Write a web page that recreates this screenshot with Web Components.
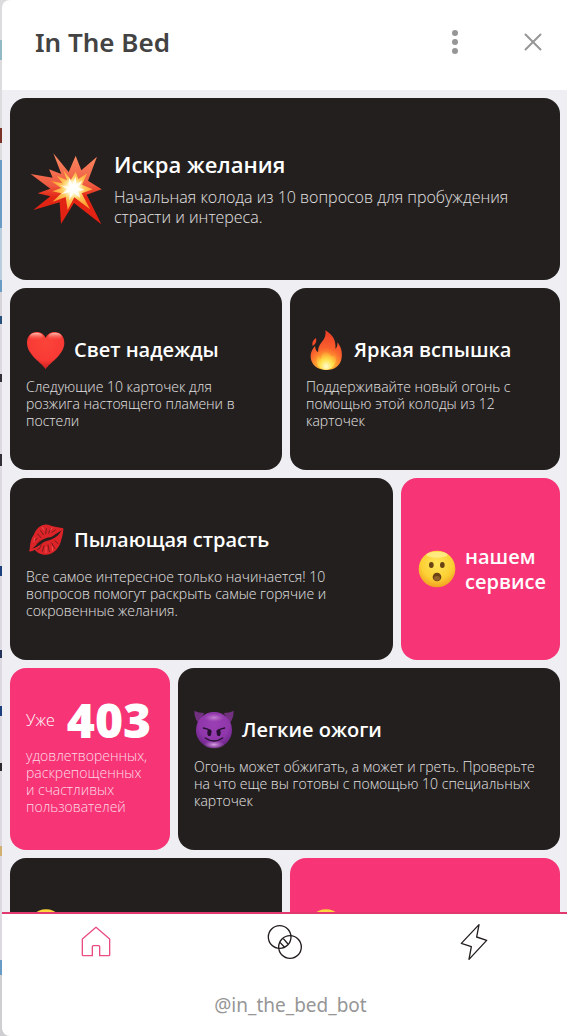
<!DOCTYPE html>
<html lang="ru">
<head>
<meta charset="utf-8">
<meta name="viewport" content="width=device-width, initial-scale=1">
<title>In The Bed</title>
<style>
html, body { margin: 0; height: 100%; }
body {
  --card-font: "Open Sans", "Noto Sans", sans-serif;
  --chrome-font: "Noto Sans", "Open Sans", sans-serif;
  --ink: #231f1e;
  --pink: #f73475;
  font-family: var(--card-font);
}
</style>
</head>
<body>
<bed-app></bed-app>

<template id="t-app">
<style>
:host {
  display: block; height: 100vh; box-sizing: border-box; padding-left: 2px;
  background: linear-gradient(#dcdcde 0 40px, #93bac4 40px 60px, #dcdcde 60px 128px, #7a3326 128px 143px, #dcdcde 143px 160px, #6a9bc4 160px 228px, #b9cddc 228px 280px, #6a9bc4 280px 292px, #d6d4d8 292px 316px, #28507c 316px 324px, #dcdae0 324px 374px, #332f38 374px 382px, #dcdae0 382px 454px, #332f38 454px 466px, #dcdae0 466px 566px, #1c3f7d 566px 576px, #dcdae0 576px 650px, #26345c 650px 658px, #dcdae0 658px 706px, #1c3f7d 706px 716px, #dcdae0 716px 763px, #2b292e 763px 771px, #dcdae0 771px 846px, #d1b072 846px 856px, #dcdae0 856px 960px, #6a9bc4 960px 975px, #cfcfd2 975px);
}
.window {
  height: 100%; display: flex; flex-direction: column; overflow: hidden;
  background: #fff; border-radius: 8px 0 0 8px;
}
main {
  flex: 1; min-height: 0; overflow-y: auto; scrollbar-width: none;
  background: #efeef3; padding: 8px 7px 8px 8px;
  display: flex; flex-direction: column; gap: 8px;
}
bed-row { flex: none; }
</style>
<div class="window">
  <bed-header>In The Bed</bed-header>
  <main>
    <bed-row>
      <deck-card large icon="spark"><span slot="title">Искра желания</span>Начальная колода из 10 вопросов для пробуждения страсти и интереса.</deck-card>
    </bed-row>
    <bed-row style="--cols: 272fr 270fr">
      <deck-card icon="heart"><span slot="title">Свет надежды</span>Следующие 10 карточек для розжига настоящего пламени в постели</deck-card>
      <deck-card icon="fire"><span slot="title">Яркая вспышка</span>Поддерживайте новый огонь с помощью этой колоды из 12 карточек</deck-card>
    </bed-row>
    <bed-row style="--cols: 383fr 159fr">
      <deck-card icon="lips"><span slot="title">Пылающая страсть</span>Все самое интересное только начинается! 10 вопросов помогут раскрыть самые горячие и сокровенные желания.</deck-card>
      <deck-card pink bare icon="wow"><span slot="title">нашем сервисе</span></deck-card>
    </bed-row>
    <bed-row style="--cols: 160fr 382fr">
      <stat-card label="Уже" value="403">удовлетворенных, раскрепощенных и&nbsp;счастливых пользователей</stat-card>
      <deck-card icon="devil"><span slot="title">Легкие ожоги</span>Огонь может обжигать, а может и греть. Проверьте на что еще вы готовы с помощью 10 специальных карточек</deck-card>
    </bed-row>
    <bed-row style="--cols: 272fr 270fr">
      <deck-card icon="face"></deck-card>
      <deck-card pink icon="face"></deck-card>
    </bed-row>
  </main>
  <bed-nav></bed-nav>
  <bed-footer>@in_the_bed_bot</bed-footer>
</div>
</template>

<template id="t-header">
<style>
:host {
  display: flex; align-items: center; height: 90px; flex: none; box-sizing: border-box;
  padding: 0 14px 6px 33px; font-family: var(--chrome-font); color: #434343;
}
h1 { flex: 1; margin: 0; font-size: 26px; line-height: 36px; font-weight: 600; white-space: nowrap; }
.tools { display: flex; gap: 38px; }
button { width: 40px; height: 40px; padding: 0; border: 0; background: none; display: block; }
svg { display: block; width: 40px; height: 40px; }
</style>
<h1><slot></slot></h1>
<div class="tools">
  <button aria-label="Меню"><svg viewBox="0 0 40 40" fill="#969696"><circle cx="20" cy="11" r="3"/><circle cx="20" cy="20" r="3"/><circle cx="20" cy="29" r="3"/></svg></button>
  <button aria-label="Закрыть"><svg viewBox="0 0 40 40" fill="none" stroke="#969696" stroke-width="2" stroke-linecap="round"><path d="M12.500 12.500 27.500 27.500M27.500 12.500 12.500 27.500"/></svg></button>
</div>
</template>

<template id="t-row">
<style>
:host { display: grid; grid-template-columns: var(--cols, 1fr); gap: 8px; grid-auto-rows: 182px; }
</style>
<slot></slot>
</template>

<template id="t-card">
<style>
:host {
  display: flex; flex-direction: column; justify-content: center; gap: 8px; min-width: 0;
  box-sizing: border-box; padding: 0 16px; border-radius: 16px; background: var(--ink); color: #fff;
}
:host([pink]) { background: var(--pink); }
.head { display: flex; align-items: center; gap: 8px; }
emoji-icon { width: 40px; height: 40px; flex: none; }
h2 { margin: 0; font-size: 20px; line-height: 25px; font-weight: 600; }
p { margin: 0; min-height: 34px; font-size: 14px; line-height: 17px; font-weight: 300; color: #e4e3e3; }
:host([bare]) p { display: none; }
:host([large]) { display: grid; grid-template-columns: 80px 1fr; column-gap: 8px; row-gap: 8px; align-content: center; }
:host([large]) .head { display: contents; }
:host([large]) emoji-icon { width: 80px; height: 80px; grid-row: 1 / 3; align-self: center; }
:host([large]) h2 { font-size: 22px; line-height: 30px; }
:host([large]) p { grid-column: 2; font-size: 16px; line-height: 20px; min-height: 42px; }
</style>
<div class="head"><emoji-icon></emoji-icon><h2><slot name="title"></slot></h2></div>
<p><slot></slot></p>
</template>

<template id="t-stat">
<style>
:host {
  display: flex; flex-direction: column; justify-content: center; gap: 6px; min-width: 0;
  box-sizing: border-box; padding: 0 16px 4px; border-radius: 16px; background: var(--pink); color: #fff;
}
.head { display: flex; align-items: center; gap: 12px; }
.label { font-size: 16px; line-height: 20px; font-weight: 300; }
strong { font-size: 48px; line-height: 42px; font-weight: 800; }
p { margin: 0; font-size: 14px; line-height: 17px; font-weight: 300; color: #fddbe6; }
</style>
<div class="head"><span class="label"></span><strong></strong></div>
<p><slot></slot></p>
</template>

<template id="t-nav">
<style>
:host { display: block; flex: none; border-top: 2px solid #e0386f; }
nav { display: grid; grid-template-columns: repeat(3, 1fr); padding: 8px 0 12px; }
a { display: flex; justify-content: center; color: var(--ink); }
a[aria-current] { color: #ea4c84; }
svg { width: 40px; height: 40px; fill: none; stroke: currentColor; stroke-width: 4; stroke-linejoin: round; }
</style>
<nav>
  <a href="#home" aria-label="Главная" aria-current="page"><svg viewBox="228 216 120 120"><path d="M288 232 247 267V314Q247 317 250 317H277V290Q277 287 280 287H296Q299 287 299 290V317H326Q329 317 329 314V267Z"/></svg></a>
  <a href="#match" aria-label="Совпадения"><svg viewBox="793 216 120 120"><circle cx="840" cy="261" r="34"/><circle cx="871" cy="291" r="34"/><path d="M841 277 854 291M851 266 865 282"/></svg></a>
  <a href="#flash" aria-label="Молния"><svg viewBox="279 216 120 120"><path d="M357 224 304 280 334 290 327 328 380 271 350 261Z"/></svg></a>
</nav>
</template>

<template id="t-footer">
<style>
:host { display: block; flex: none; padding: 18px 0; text-align: center; font: 400 19px/26px var(--chrome-font); color: #969696; margin-left: 12px; }
</style>
<slot></slot>
</template>

<script>
const EMOJI = {
  spark: ['78 57 240 240', `
    <defs><linearGradient id="a" x1="0" y1="0" x2="0" y2="1"><stop offset="0" stop-color="#fb8a62"/><stop offset=".45" stop-color="#ee5a40"/><stop offset=".62" stop-color="#e22514"/><stop offset="1" stop-color="#e32012"/></linearGradient>
    <radialGradient id="b" gradientUnits="userSpaceOnUse" cx="219" cy="175" r="66"><stop offset="0" stop-color="#fff"/><stop offset=".3" stop-color="#fff3bd"/><stop offset=".5" stop-color="#ffc95c"/><stop offset="1" stop-color="#ff962c"/></radialGradient></defs>
    <path fill="url(#a)" d="M160 70 206 126 227 77 244 121 291 80 264 152 305 178 260 194 304 283 222 219 183 282 179 217 100 240 151 199 113 190 151 176 92 132 158 143 147 118 184 132Z"/>
    <path fill="url(#b)" d="M190 121 213 149 227 125 235 147 262 130 246 164 278 178 245 190 270 238 223 202 203 240 197 201 157 216 184 190 157 184 184 174 153 153 188 160 171 138 201 151Z"/>
    <path fill="#fff" opacity=".85" d="M207 144 218 162 227 139 229 163 248 151 235 172 254 180 234 184 241 204 221 188 208 211 209 187 184 193 203 177 180 166 206 170Z"/>`],
  heart: ['48 60 120 120', `
    <defs><radialGradient id="a" cx=".5" cy=".3" r=".7"><stop offset="0" stop-color="#fb4439"/><stop offset=".65" stop-color="#f93a35"/><stop offset="1" stop-color="#c9201e"/></radialGradient><linearGradient id="b" x1="0" y1="0" x2="0" y2="1"><stop offset="0" stop-color="#ffc3b5"/><stop offset="1" stop-color="#fb4439" stop-opacity="0"/></linearGradient></defs>
    <path fill="url(#a)" d="M107 178C96 158 51 136 51 98 51 79 63 66 80 66 94 66 103 74 107 84 111 74 120 66 134 66 151 66 163 79 163 98 163 136 118 158 107 178Z"/>
    <ellipse fill="url(#b)" cx="79" cy="80" rx="20" ry="12"/><ellipse fill="url(#b)" cx="135" cy="80" rx="20" ry="12"/>`],
  fire: ['48 60 120 120', `
    <defs><radialGradient id="a" gradientUnits="userSpaceOnUse" cx="108" cy="168" r="100"><stop offset="0" stop-color="#ffd83c"/><stop offset=".3" stop-color="#ff9d2f"/><stop offset=".55" stop-color="#f9602d"/><stop offset="1" stop-color="#ee3f27"/></radialGradient><radialGradient id="b" cx=".5" cy=".85" r=".7"><stop offset="0" stop-color="#fffbd0"/><stop offset=".45" stop-color="#ffe14d"/><stop offset="1" stop-color="#ffc43c" stop-opacity="0"/></radialGradient></defs>
    <path fill="url(#a)" d="M106 61C127 73 139 91 136 116 141 113 143 106 142 97 154 111 157 126 155 143 152 167 134 179 109 180 84 181 64 166 62 142 61 128 67 117 75 108 76 117 79 124 84 127 84 109 91 102 100 90 106 81 108 71 106 61Z"/>
    <path fill="#ef4a29" d="M78 84C80 95 78 101 68 108 65 99 68 91 78 84Z"/>
    <path fill="url(#b)" d="M109 114C115 124 117 134 127 139 131 136 133 132 134 127 144 147 138 178 108 179 78 178 74 149 84 133 86 140 89 145 93 146 93 132 103 125 109 114Z"/>`],
  lips: ['78 30 120 120', `
    <path fill="#dc2428" d="M89 118C91 100 92 88 101 75 107 58 119 45 134 44 142 42 149 45 155 48 167 51 179 53 190 55 190 67 188 78 184 89 178 113 163 132 139 134 124 134 111 128 104 119 99 122 94 125 87 124Z"/>
    <path fill="#231f1e" d="M96 116C112 104 118 92 134 86 145 80 150 84 160 77 170 70 178 66 185 61 178 73 170 82 158 86 147 92 142 90 132 96 120 104 112 112 96 116Z"/>
    <path fill="none" stroke="#781b1d" stroke-width="3" stroke-linecap="round" d="M105 92 111 85M111 101 120 92M113 72 123 83M122 62 130 74M139 56 137 71M151 57 146 70M166 60 156 67M119 115 112 119M132 108 127 124M144 105 148 125M155 99 164 115M165 92 174 101M124 105 120 112"/>
    <path fill="none" stroke="#fa686a" stroke-width="2" stroke-linecap="round" d="M127 52 132 60M157 53 151 60M138 112 138 128M157 110 158 122M104 84 102 94"/>`],
  wow: ['81 237 120 120', `
    <defs><radialGradient id="a" cx=".5" cy=".35" r=".65"><stop offset="0" stop-color="#ffe55a"/><stop offset=".65" stop-color="#fdd035"/><stop offset="1" stop-color="#f0a020"/></radialGradient></defs>
    <circle cx="141" cy="297" r="55" fill="url(#a)"/><ellipse cx="141" cy="254" rx="32" ry="9" fill="#fff6a8" opacity=".6"/>
    <ellipse cx="124" cy="285" rx="7" ry="9" fill="#684313"/><ellipse cx="157" cy="285" rx="7" ry="9" fill="#684313"/><circle cx="141" cy="321" r="13" fill="#6b4212"/><ellipse cx="141" cy="325" rx="9" ry="7" fill="#92602a"/>`],
  devil: ['582 150 120 120', `
    <defs><radialGradient id="a" cx=".5" cy=".35" r=".65"><stop offset="0" stop-color="#9b3fb4"/><stop offset=".65" stop-color="#8e36aa"/><stop offset="1" stop-color="#6a2486"/></radialGradient><radialGradient id="b"><stop offset="0" stop-color="#d9a3e0"/><stop offset="1" stop-color="#b86dc8" stop-opacity="0"/></radialGradient></defs>
    <path fill="#713080" d="M583 152C592 158 602 157 613 159L595 188C586 178 583 166 583 152ZM701 152C692 158 682 157 671 159L690 188C698 178 701 166 701 152Z"/>
    <circle cx="642" cy="210" r="54" fill="url(#a)"/><ellipse cx="642" cy="173" rx="32" ry="13" fill="url(#b)" opacity=".7"/><ellipse cx="642" cy="254" rx="32" ry="13" fill="url(#b)"/>
    <ellipse cx="628" cy="218" rx="6" ry="10" fill="#26102f"/><ellipse cx="656" cy="218" rx="6" ry="10" fill="#26102f"/>
    <path fill="none" stroke="#26102f" stroke-width="4" stroke-linecap="round" d="M610 204Q624 206 633 214M674 204Q660 206 651 214M616 234Q642 252 668 234"/>`],
  face: ['0 0 120 120', `
    <defs><radialGradient id="a" cx=".5" cy=".4" r=".6"><stop offset="0" stop-color="#ffe55a"/><stop offset=".8" stop-color="#fdd035"/><stop offset="1" stop-color="#f0b429"/></radialGradient></defs>
    <circle cx="60" cy="60" r="56" fill="url(#a)"/><circle cx="42" cy="52" r="7" fill="#684313"/><circle cx="78" cy="52" r="7" fill="#684313"/><path d="M36 78Q60 98 84 78" fill="none" stroke="#684313" stroke-width="5"/>`]
};

class TemplateElement extends HTMLElement {
  constructor() {
    super();
    const t = document.getElementById(this.constructor.template);
    this.attachShadow({ mode: 'open' }).append(t.content.cloneNode(true));
  }
}
class EmojiIcon extends HTMLElement {
  static observedAttributes = ['name'];
  constructor() { super(); this.attachShadow({ mode: 'open' }); }
  attributeChangedCallback(_, __, name) {
    const [box, art] = EMOJI[name];
    this.shadowRoot.innerHTML = `<style>:host{display:block}svg{display:block;width:100%;height:100%}</style><svg viewBox="${box}" aria-hidden="true">${art}</svg>`;
  }
}
class BedHeader extends TemplateElement { static template = 't-header'; }
class BedRow extends TemplateElement { static template = 't-row'; }
class DeckCard extends TemplateElement {
  static template = 't-card';
  connectedCallback() { this.shadowRoot.querySelector('emoji-icon').setAttribute('name', this.getAttribute('icon')); }
}
class StatCard extends TemplateElement {
  static template = 't-stat';
  connectedCallback() {
    this.shadowRoot.querySelector('.label').textContent = this.getAttribute('label');
    this.shadowRoot.querySelector('strong').textContent = this.getAttribute('value');
  }
}
class BedNav extends TemplateElement { static template = 't-nav'; }
class BedFooter extends TemplateElement { static template = 't-footer'; }
class BedApp extends TemplateElement { static template = 't-app'; }

customElements.define('emoji-icon', EmojiIcon);
customElements.define('bed-header', BedHeader);
customElements.define('bed-row', BedRow);
customElements.define('deck-card', DeckCard);
customElements.define('stat-card', StatCard);
customElements.define('bed-nav', BedNav);
customElements.define('bed-footer', BedFooter);
customElements.define('bed-app', BedApp);
</script>
</body>
</html>
